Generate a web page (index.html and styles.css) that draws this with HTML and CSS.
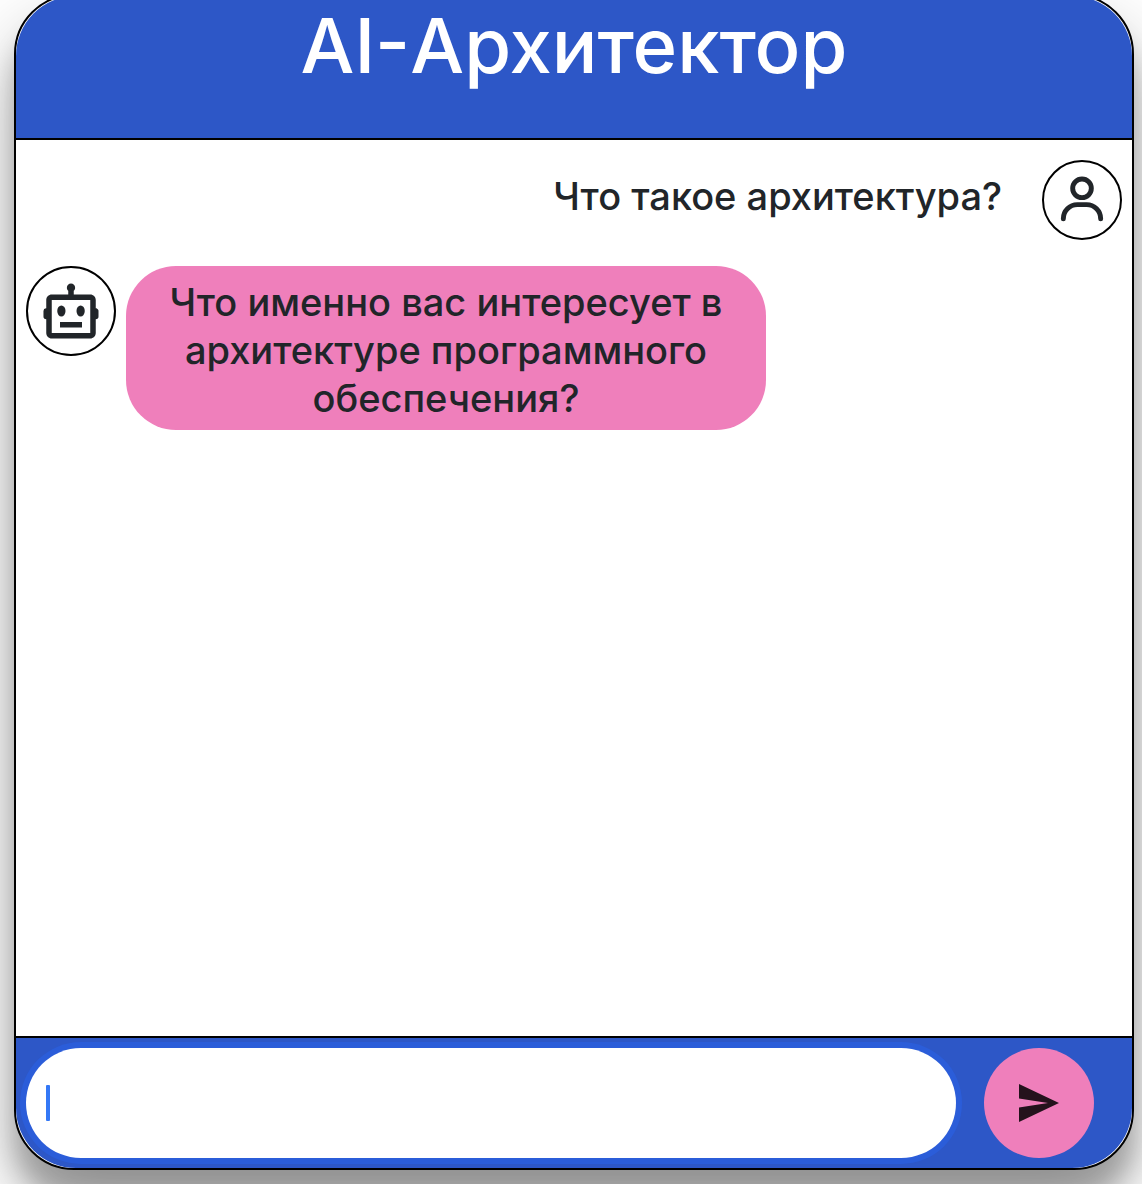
FILE: index.html
```html
<!DOCTYPE html>
<html lang="ru">
<head>
  <meta charset="utf-8">
  <meta name="viewport" content="width=device-width, initial-scale=1">
  <title>AI-Архитектор</title>
  <link rel="stylesheet" href="styles.css">
</head>
<body>
  <main class="chat">
    <header class="chat-header">
      <h1 class="chat-title">AI-Архитектор</h1>
    </header>
    <section class="messages">
      <div class="message message-user">
        <p class="bubble">Что такое архитектура?</p>
        <div class="avatar">
          <svg class="user-icon" viewBox="0 0 24 24" aria-hidden="true">
            <circle cx="12" cy="7" r="4"/>
            <path d="M4 20.100V20a6 6 0 0 1 6-6h4a6 6 0 0 1 6 6v.1"/>
          </svg>
        </div>
      </div>
      <div class="message message-bot">
        <div class="avatar avatar-bot">
          <svg class="bot-icon" viewBox="0 0 24 24" aria-hidden="true">
            <path d="M21.928 11.607c-.202-.488-.635-.605-.928-.633V8c0-1.103-.897-2-2-2h-6V4.61c.305-.274.5-.668.5-1.11a1.5 1.5 0 0 0-3 0c0 .442.195.836.5 1.11V6H5c-1.103 0-2 .897-2 2v2.997l-.082.006A1 1 0 0 0 1.99 12v2a1 1 0 0 0 1 1H3v5c0 1.103.897 2 2 2h14c1.103 0 2-.897 2-2v-5a1 1 0 0 0 1-1v-1.938a1.006 1.006 0 0 0-.072-.455zM5 20V8h14l.001 3.996L19 12v2l.001.005.001 5.995H5z"/>
            <ellipse cx="8.5" cy="12" rx="1.5" ry="2"/>
            <ellipse cx="15.5" cy="12" rx="1.5" ry="2"/>
            <path d="M8 16h8v2H8z"/>
          </svg>
        </div>
        <p class="bubble bubble-bot">Что именно вас интересует в архитектуре программного обеспечения?</p>
      </div>
    </section>
    <form class="composer">
      <div class="field">
        <input class="message-input" type="text" aria-label="Сообщение" autocomplete="off">
        <span class="caret"></span>
      </div>
      <button class="send" type="button" aria-label="Отправить">
        <svg class="send-icon" viewBox="0 0 40 38" aria-hidden="true">
          <path d="M0 0l40 19L0 38V23.500L29 19 0 14.500z"/>
        </svg>
      </button>
    </form>
  </main>
</body>
</html>
```
FILE: styles.css
```css
* {
  box-sizing: border-box;
}

body {
  display: flow-root;
  min-height: 100vh;
  margin: 0;
  overflow: hidden;
  background: #fff;
  color: #212529;
  font-family: Inter, "Liberation Sans", sans-serif;
  font-size: 38px;
  font-weight: 500;
  line-height: 48px;
}

.chat {
  display: flex;
  flex-direction: column;
  min-height: calc(100vh - 8px);
  margin: -6px 8px 0 14px;
  border: 2px solid #000;
  border-radius: 60px;
  background: #fff;
  box-shadow: 0 38px 76px rgba(0, 0, 0, 0.3), 0 30px 24px rgba(0, 0, 0, 0.22);
}

.chat-header {
  padding: 5px 20px 49px;
  border-bottom: 2px solid #000;
  border-radius: 60px 60px 0 0;
  background: #2d57c7;
}

.chat-title {
  margin: 0;
  color: #fff;
  font-size: 76px;
  font-weight: 500;
  line-height: 88px;
  text-align: center;
}

.messages {
  display: flex;
  flex: 1;
  flex-direction: column;
  gap: 26px;
  padding: 20px 10px;
}

.message {
  display: flex;
  align-items: flex-start;
  gap: 10px;
}

.message-user {
  justify-content: flex-end;
}

.bubble {
  max-width: 640px;
  margin: 0;
  padding: 12px 30px 8px;
  border-radius: 50px;
  text-align: center;
}

.bubble-bot {
  background: #ef7fbb;
}

.avatar {
  display: flex;
  flex: none;
  align-items: center;
  justify-content: center;
  width: 80px;
  height: 80px;
  border: 2px solid #000;
  border-radius: 50%;
}

.avatar-bot {
  width: 90px;
  height: 90px;
}

.user-icon {
  width: 56px;
  height: 56px;
  fill: none;
  stroke: #212529;
  stroke-width: 2.1;
  stroke-linecap: round;
}

.bot-icon {
  width: 66px;
  height: 66px;
  fill: #212529;
}

.composer {
  display: flex;
  gap: 28px;
  padding: 10px 38px 10px 10px;
  border-top: 2px solid #000;
  border-radius: 0 0 60px 60px;
  background: #2d57c7;
}

.field {
  position: relative;
  flex: 1;
}

.message-input {
  display: block;
  width: 100%;
  height: 110px;
  padding: 0 20px;
  border: 0;
  border-radius: 55px;
  outline: 0;
  background: #fff;
  box-shadow: 0 0 0 6px #2b5dd9;
  color: inherit;
  font: inherit;
}

.caret {
  position: absolute;
  top: 37px;
  left: 20px;
  width: 4px;
  height: 36px;
  border-radius: 1px;
  background: #3478f6;
}

.send {
  display: flex;
  align-items: center;
  justify-content: center;
  width: 110px;
  height: 110px;
  padding: 0;
  border: 0;
  border-radius: 50%;
  background: #ef7fbb;
}

.send-icon {
  width: 40px;
  height: 38px;
  fill: #24121c;
}
```
